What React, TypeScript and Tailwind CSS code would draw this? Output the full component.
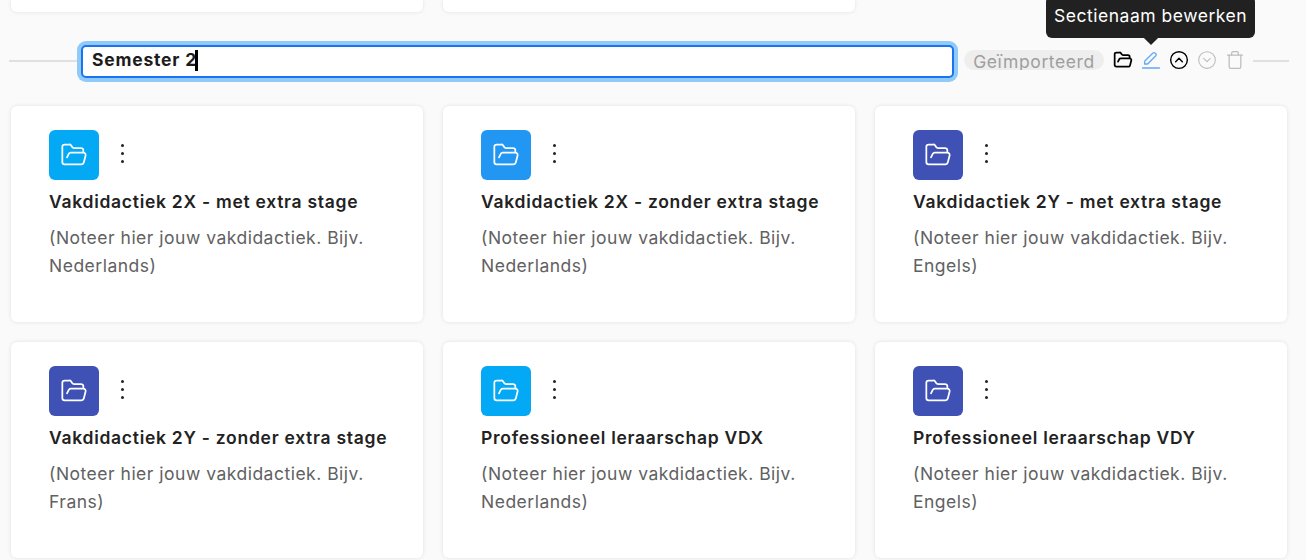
import { CircleChevronDown, CircleChevronUp, FolderOpen, Trash } from 'lucide-react'

type Course = {
  title: string
  color: string
  language: string
}

const courses: Course[] = [
  { title: 'Vakdidactiek 2X - met extra stage', color: 'bg-[#03a9f4]', language: 'Nederlands)' },
  { title: 'Vakdidactiek 2X - zonder extra stage', color: 'bg-[#2196f3]', language: 'Nederlands)' },
  { title: 'Vakdidactiek 2Y - met extra stage', color: 'bg-[#3f51b5]', language: 'Engels)' },
  { title: 'Vakdidactiek 2Y - zonder extra stage', color: 'bg-[#3f51b5]', language: 'Frans)' },
  { title: 'Professioneel leraarschap VDX', color: 'bg-[#03a9f4]', language: 'Nederlands)' },
  { title: 'Professioneel leraarschap VDY', color: 'bg-[#3f51b5]', language: 'Engels)' },
]

function CourseCard({ course }: { course: Course }) {
  return (
    <div className="h-[216px] rounded-md bg-white pl-[38px] pr-6 pt-6 shadow-[0_0_4px_rgba(0,0,0,0.1)]">
      <div className="flex items-center gap-[13px]">
        <div className={`flex h-[50px] w-[50px] items-center justify-center rounded-md ${course.color}`}>
          <FolderOpen size={28} strokeWidth={1.5} className="text-white" />
        </div>
        <div className="-mt-[3px] flex h-6 w-5 flex-col items-center justify-center gap-[5px]">
          <span className="h-[3px] w-[3px] rounded-full bg-[#222]" />
          <span className="h-[3px] w-[3px] rounded-full bg-[#222]" />
          <span className="h-[3px] w-[3px] rounded-full bg-[#222]" />
        </div>
      </div>
      <h3 className="mt-[10px] text-[17.5px] font-semibold leading-6 tracking-[0.72px] text-[#222]">{course.title}</h3>
      <p className="mt-[10px] text-[17.5px] leading-7 tracking-[0.5px] text-[#616161]">
        (Noteer hier jouw vakdidactiek. Bijv.
        <br />
        {course.language}
      </p>
    </div>
  )
}

function SectionHeader() {
  return (
    <div className="mt-[31px] flex h-[36px] items-center pl-[9px] pr-[17px]">
      <div className="h-[2px] w-[72px] bg-[#e0e0e0]" />
      <div className="flex h-[33px] w-[873px] items-center rounded-[5px] border-2 border-[#1a73f0] bg-white pb-[2px] pl-[9px] text-[17.5px] font-bold tracking-[0.8px] text-[#1c1c1c] shadow-[0_0_0_4px_#90caf9]">
        Semester 2<span className="ml-[-2px] h-[21px] w-[3px] bg-black" />
      </div>
      <div className="mb-[3px] ml-[10px] h-5 w-[140px] overflow-hidden rounded-full bg-[#eeeeee] text-center text-[17.5px] leading-[23px] tracking-[0.6px] text-[#9e9e9e]">
        Geïmporteerd
      </div>
      <div className="relative mb-[3px] ml-[9px] flex items-center gap-[8px] text-black">
        <FolderOpen size={20} strokeWidth={2.1} />
        <svg width="20" height="20" viewBox="0 0 20 20" fill="none" stroke="#64a8f5" strokeWidth="1.3" strokeLinejoin="round" strokeLinecap="round">
          <path d="M3.5 14 L3.8 11 L12 3 a1.4 1.4 0 0 1 2 0 l0.8 0.8 a1.4 1.4 0 0 1 0 2 L6.6 14 Z" />
          <path d="M1.5 18 H18.5" />
        </svg>
        <CircleChevronUp size={20} strokeWidth={1.7} />
        <CircleChevronDown size={20} strokeWidth={1.3} className="text-[#bdbdbd]" />
        <Trash size={20} strokeWidth={1.5} className="text-[#bdbdbd]" />
        <div className="absolute bottom-[32px] left-[-67px] whitespace-nowrap rounded-md bg-[#212121] px-2 pb-[11px] pt-[9px] text-[17.5px] leading-[22px] tracking-[0.52px] text-white">
          Sectienaam bewerken
          <span className="absolute bottom-[-5px] left-[100px] h-[10px] w-[10px] rotate-45 bg-[#212121]" />
        </div>
      </div>
      <div className="ml-[8px] h-[2px] flex-1 bg-[#e0e0e0]" />
    </div>
  )
}

export default function App() {
  return (
    <div className="h-[560px] w-[1306px] overflow-hidden bg-[#fafafa] font-['Inter',sans-serif]">
      <div className="grid grid-cols-[412px_412px] gap-5 pl-[11px]">
        <div className="h-3 rounded-b-md bg-white shadow-[0_0_4px_rgba(0,0,0,0.1)]" />
        <div className="h-3 rounded-b-md bg-white shadow-[0_0_4px_rgba(0,0,0,0.1)]" />
      </div>
      <SectionHeader />
      <div className="mt-[27px] grid grid-cols-[412px_412px_412px] gap-5 pl-[11px]">
        {courses.map((course) => (
          <CourseCard key={course.title} course={course} />
        ))}
      </div>
    </div>
  )
}
